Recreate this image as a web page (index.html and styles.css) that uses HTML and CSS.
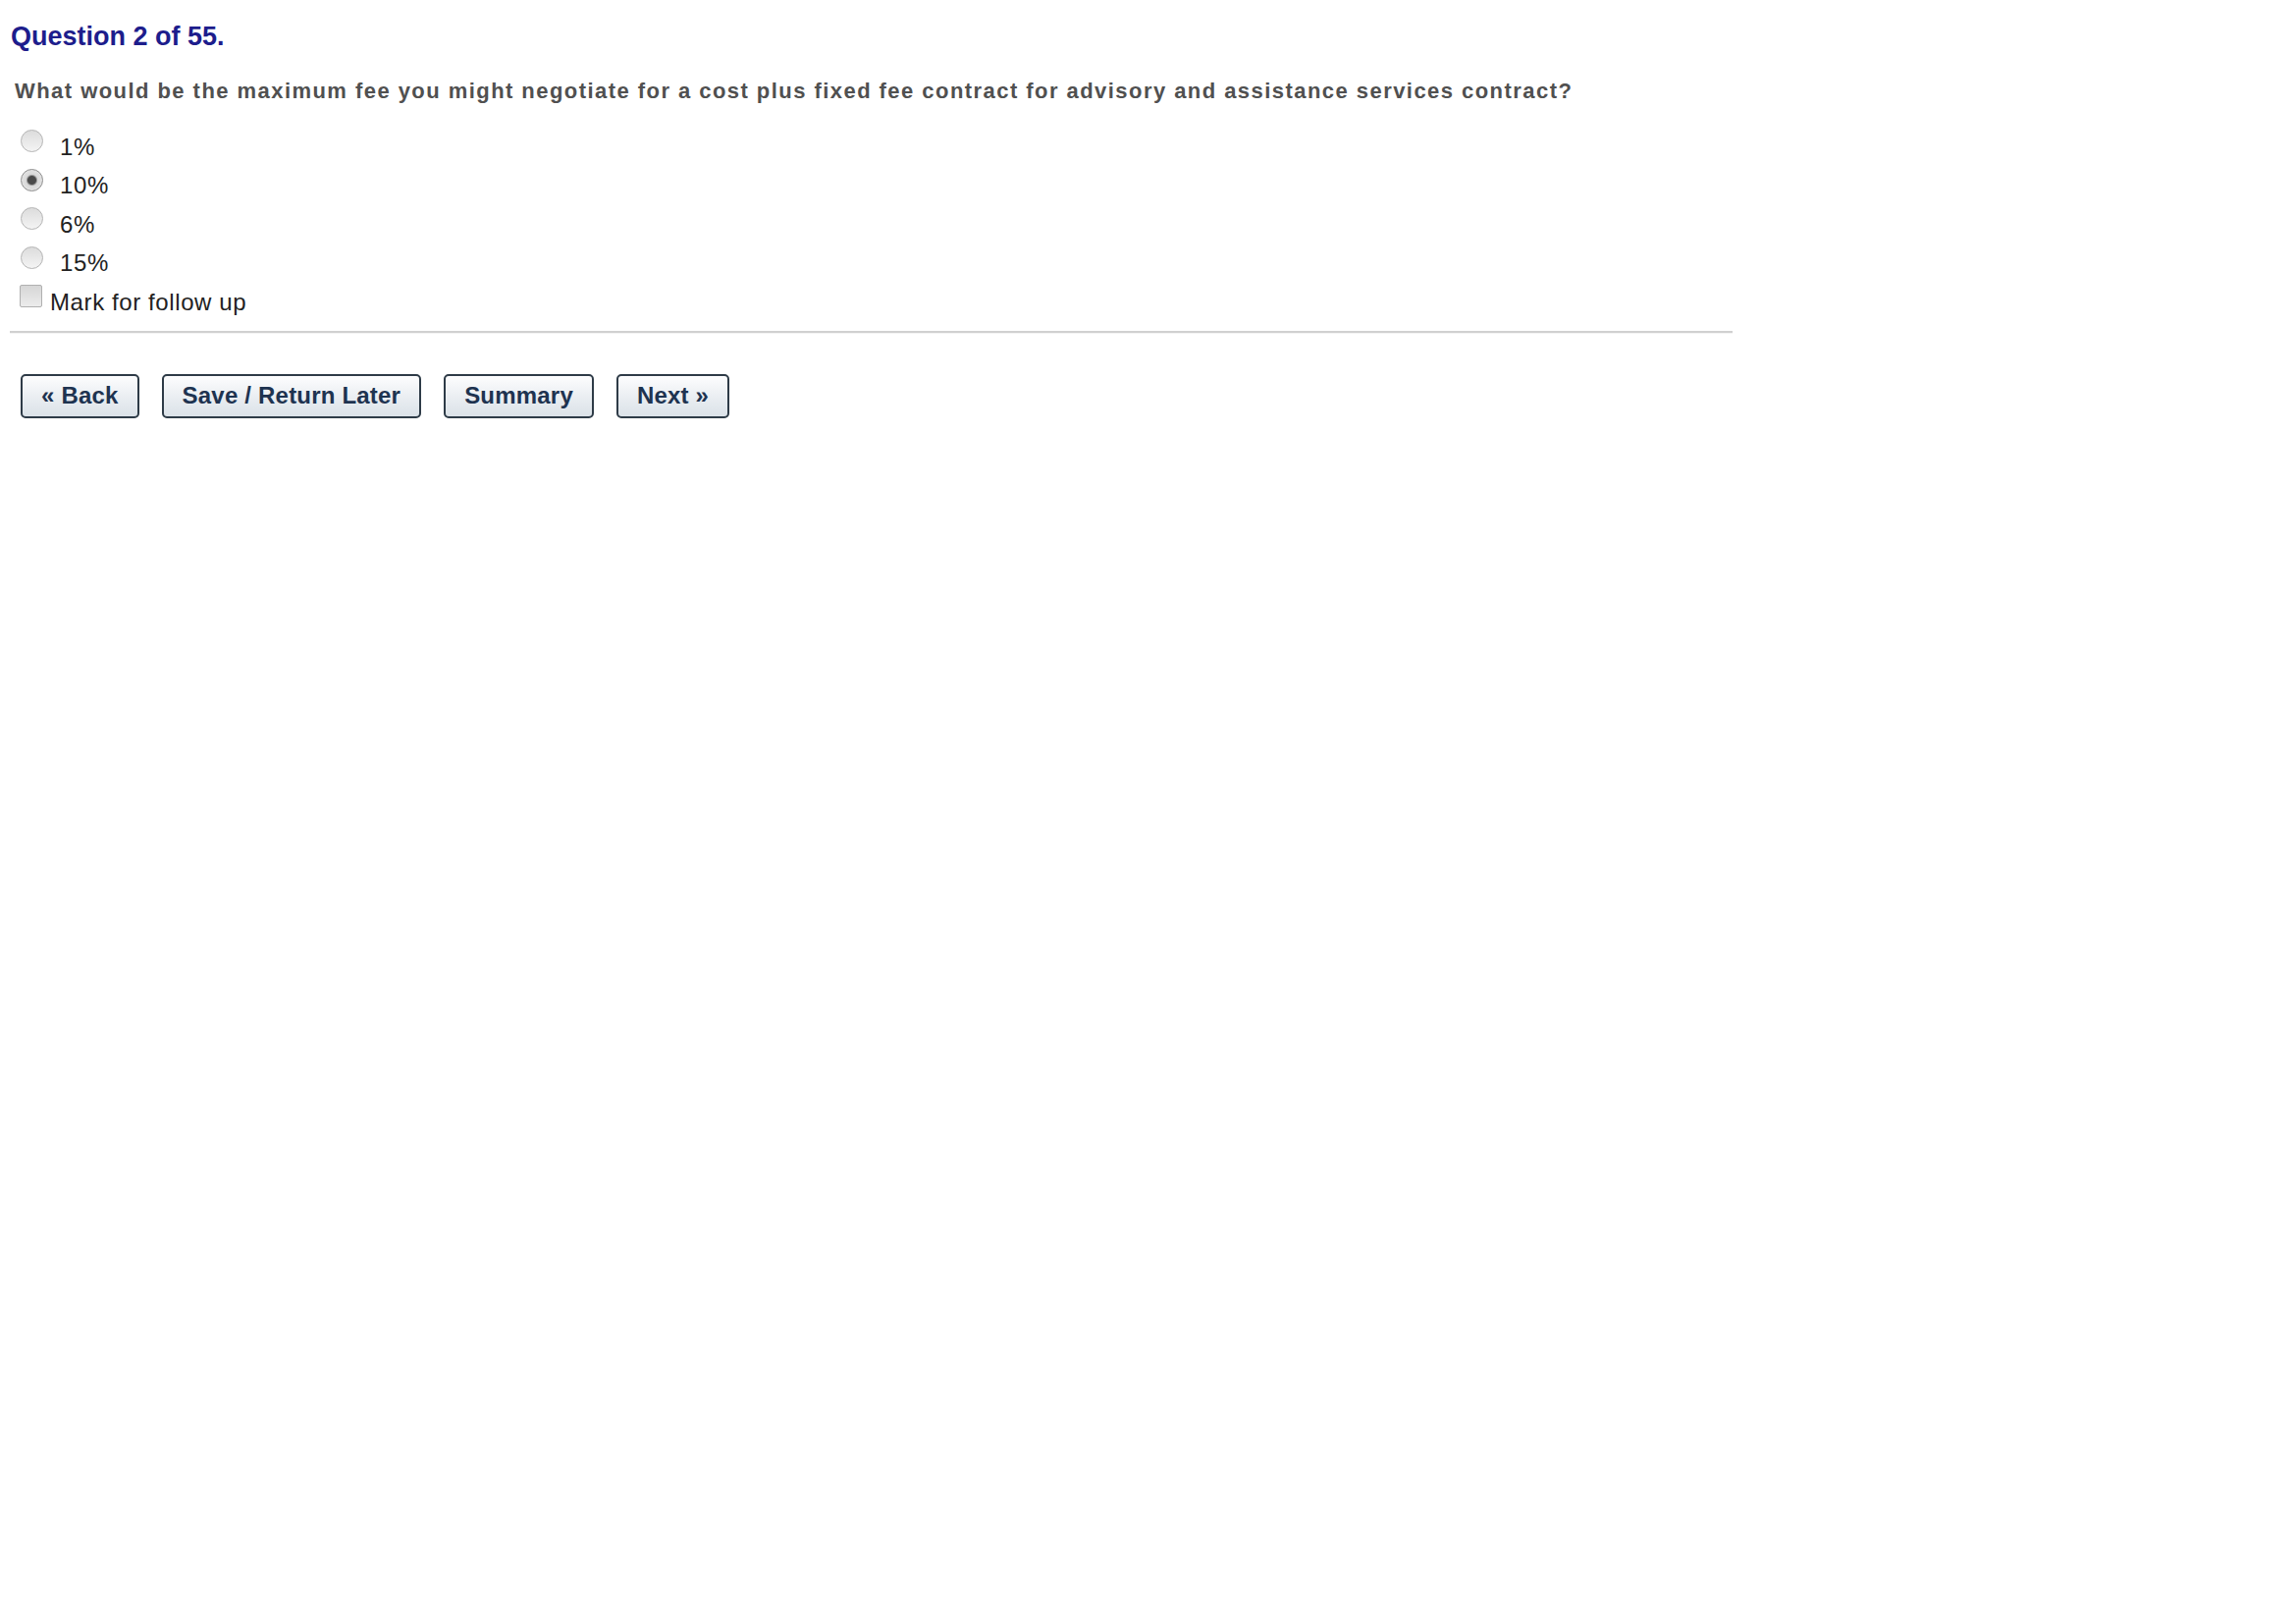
FILE: index.html
```html
<!DOCTYPE html>
<html lang="en">
<head>
    <meta charset="UTF-8">
    <title>Question 2 of 55</title>
    <link rel="stylesheet" href="styles.css">
</head>
<body>

    <div class="quiz">
        <h2 class="qnum">Question 2 of 55.</h2>
        <p class="qtext">What would be the maximum fee you might negotiate for a cost plus fixed fee contract for advisory and assistance services contract?</p>

        <form class="answers">
            <label class="opt"><input type="radio" name="ans" value="1"><span>1%</span></label>
            <label class="opt"><input type="radio" name="ans" value="10" checked><span>10%</span></label>
            <label class="opt"><input type="radio" name="ans" value="6"><span>6%</span></label>
            <label class="opt"><input type="radio" name="ans" value="15"><span>15%</span></label>
            <label class="opt follow"><input type="checkbox" name="follow"><span>Mark for follow up</span></label>
        </form>

        <hr class="sep">

        <div class="nav-buttons">
            <button class="btn" type="button">&laquo; Back</button>
            <button class="btn" type="button">Save / Return Later</button>
            <button class="btn" type="button">Summary</button>
            <button class="btn" type="button">Next &raquo;</button>
        </div>
    </div>

</body>
</html>
```

FILE: styles.css
```css
body {
    margin: 0;
    padding: 0;
    background-color: #fff;
    font-family: "Liberation Sans", Arial, sans-serif;
}

.quiz {
    width: 1755px;
    padding: 21px 10px 0 10px;
}

.qnum {
    margin: 0 0 27px 1px;
    font-size: 27px;
    line-height: 32px;
    font-weight: bold;
    color: #1d1d8c;
}

.qtext {
    margin: 0 0 24px 5px;
    font-size: 22px;
    line-height: 26px;
    font-weight: bold;
    letter-spacing: 1.45px;
    color: #505050;
}

.answers {
    margin: 0;
}

.opt {
    display: flex;
    align-items: center;
    height: 39.5px;
    font-size: 24px;
    letter-spacing: 0.6px;
    color: #222;
}

.opt input {
    appearance: none;
    -webkit-appearance: none;
    margin: 0 17px 12px 11px;
    width: 23px;
    height: 23px;
    border: 1px solid #b4b4b4;
    border-radius: 50%;
    background: linear-gradient(#dcdcdc, #f4f4f4);
    cursor: pointer;
}

.opt input:checked {
    border-color: #8d8d8d;
    background: radial-gradient(circle, #4a4a4a 0, #4a4a4a 4px, #9a9a9a 5px, #d8d8d8 6px, #ececec 100%);
}

.follow input {
    border-radius: 2px;
    width: 23px;
    height: 23px;
    margin: 0 8px 12px 10px;
    border-color: #b0b0b0;
    background: linear-gradient(#d6d6d6, #ececec);
}

.sep {
    margin: 9px 0 0 0;
    height: 0;
    border: 0;
    border-top: 2px solid #d0d0d0;
    border-bottom: 1px solid #f4f4f4;
}

.nav-buttons {
    display: flex;
    gap: 23px;
    margin: 41px 0 0 11px;
}

.btn {
    height: 45px;
    padding: 0 19px;
    font-family: "Liberation Sans", Arial, sans-serif;
    font-size: 24px;
    font-weight: bold;
    letter-spacing: 0.2px;
    color: #1e3350;
    background: linear-gradient(#fdfdfe, #e9edf1 55%, #dbe2e8);
    border: 2px solid #2e3b47;
    border-radius: 5px;
    cursor: pointer;
}
```
